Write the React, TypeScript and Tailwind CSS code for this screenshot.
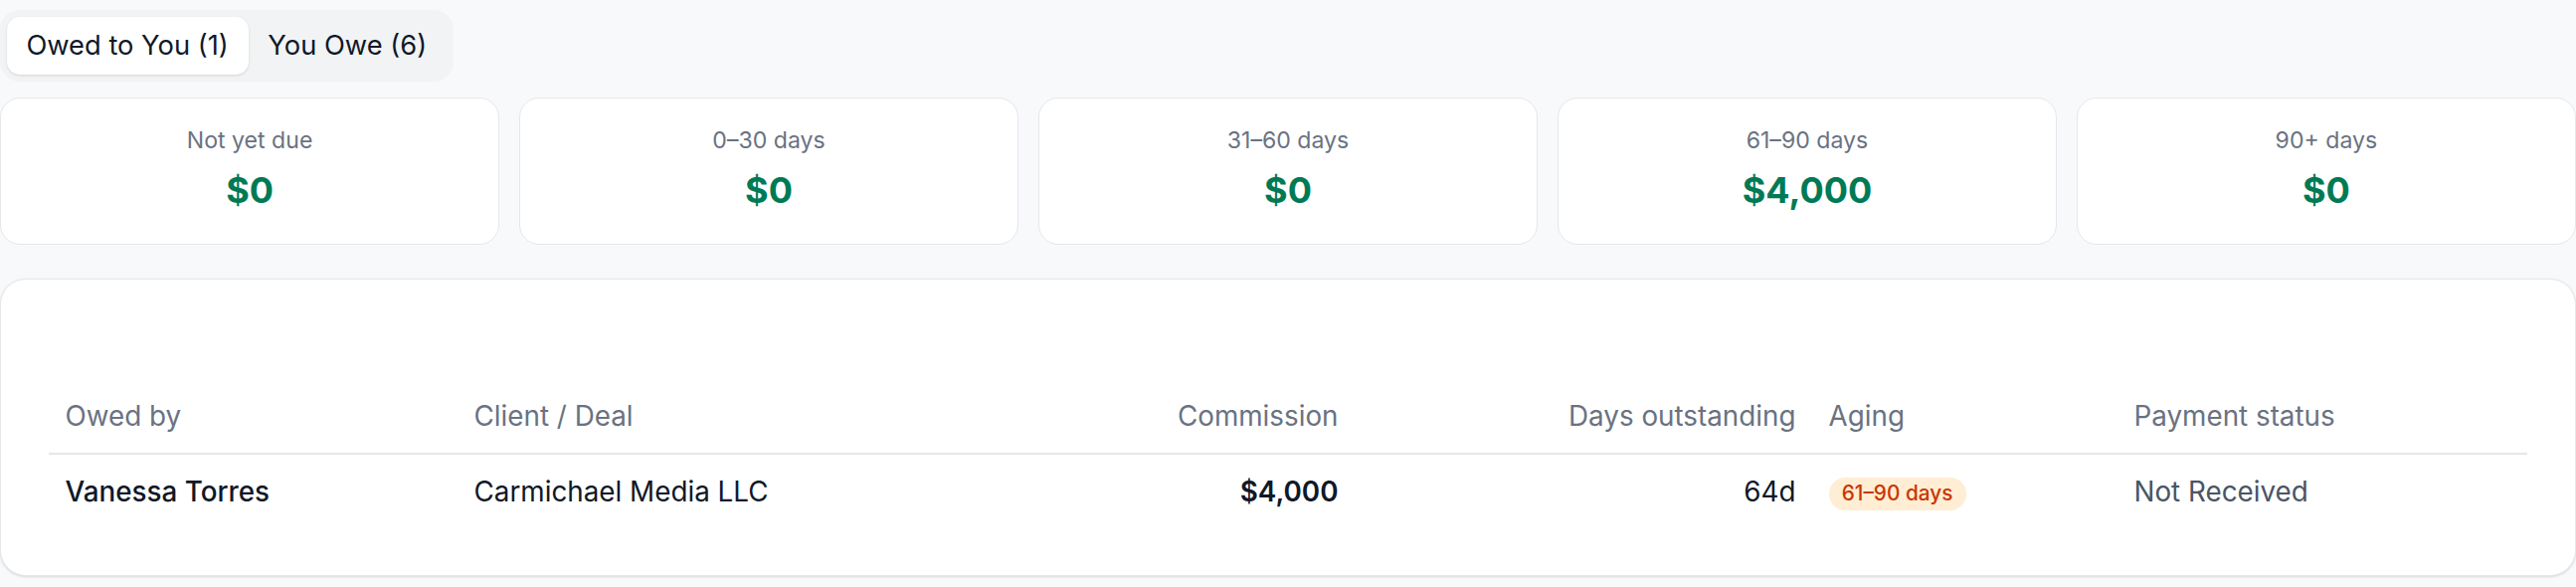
import { useState } from "react";

interface AgingBucket {
    label: string;
    amount: string;
}

const buckets: AgingBucket[] = [
    { label: "Not yet due", amount: "$0" },
    { label: "0–30 days", amount: "$0" },
    { label: "31–60 days", amount: "$0" },
    { label: "61–90 days", amount: "$4,000" },
    { label: "90+ days", amount: "$0" },
];

const rows = [
    {
        owedBy: "Vanessa Torres",
        client: "Carmichael Media LLC",
        commission: "$4,000",
        days: "64d",
        aging: "61–90 days",
        status: "Not Received",
    },
];

export default function App() {
    const [tab, setTab] = useState<"owed" | "owe">("owed");

    return (
        <div className="min-h-[590px] bg-[#f8f9fa] pt-[10px] font-['Inter',sans-serif] text-gray-900">
            <div className="inline-flex rounded-[20px] bg-[#f1f3f4] p-[6.6px]">
                <button
                    type="button"
                    onClick={() => setTab("owed")}
                    className={`rounded-[13px] px-[19.8px] py-[9.5px] text-[27.3px] leading-[39.6px] ${
                        tab === "owed" ? "bg-white shadow-sm" : ""
                    }`}
                >
                    Owed to You (1)
                </button>
                <button
                    type="button"
                    onClick={() => setTab("owe")}
                    className={`rounded-[13px] px-[19.8px] py-[9.5px] text-[27.3px] leading-[39.6px] ${
                        tab === "owe" ? "bg-white shadow-sm" : ""
                    }`}
                >
                    You Owe (6)
                </button>
            </div>

            <div className="mt-[16px] grid grid-cols-5 gap-[19.8px]">
                {buckets.map((bucket) => (
                    <div
                        key={bucket.label}
                        className="rounded-[20px] border border-[#e5e7eb] bg-white px-[26.4px] pt-[26.4px] pb-[27.5px] text-center"
                    >
                        <div className="text-[23.1px] leading-[33px] text-gray-500">
                            {bucket.label}
                        </div>
                        <div className="mt-[6.6px] text-[36px] font-bold leading-[52.8px] text-emerald-700">
                            {bucket.amount}
                        </div>
                    </div>
                ))}
            </div>

            <div className="mt-[34px] rounded-[26px] border border-[#e5e7eb] bg-white px-[48px] pt-[48px] pb-[46px] shadow-sm">
                <div className="h-[53px]" />
                <table className="w-full table-fixed border-collapse text-[27.8px] leading-[39.6px]">
                    <colgroup>
                        <col className="w-[411px]" />
                        <col className="w-[440px]" />
                        <col className="w-[462px]" />
                        <col className="w-[460px]" />
                        <col className="w-[307px]" />
                        <col />
                    </colgroup>
                    <thead>
                        <tr className="border-b-2 border-[#e5e7eb] text-gray-500">
                            <th className="px-[16.5px] py-[16.5px] text-left font-normal">Owed by</th>
                            <th className="px-[16.5px] py-[16.5px] text-left font-normal">Client / Deal</th>
                            <th className="px-[16.5px] py-[16.5px] text-right font-normal">Commission</th>
                            <th className="px-[16.5px] py-[16.5px] text-right font-normal">Days outstanding</th>
                            <th className="px-[16.5px] py-[16.5px] text-left font-normal">Aging</th>
                            <th className="px-[16.5px] py-[16.5px] text-left font-normal">Payment status</th>
                        </tr>
                    </thead>
                    <tbody>
                        {rows.map((row) => (
                            <tr key={row.owedBy}>
                                <td className="px-[16.5px] py-[18px] font-medium">{row.owedBy}</td>
                                <td className="px-[16.5px] py-[18px]">{row.client}</td>
                                <td className="px-[16.5px] py-[18px] text-right font-semibold">
                                    {row.commission}
                                </td>
                                <td className="px-[16.5px] py-[18px] text-right">{row.days}</td>
                                <td className="px-[16.5px] py-[18px]">
                                    <span className="inline-block rounded-full bg-orange-100 px-[13.2px] py-[3.3px] align-middle text-[20.8px] font-medium leading-[26.4px] text-orange-700">
                                        {row.aging}
                                    </span>
                                </td>
                                <td className="px-[16.5px] py-[18px] text-gray-600">{row.status}</td>
                            </tr>
                        ))}
                    </tbody>
                </table>
            </div>
        </div>
    );
}
